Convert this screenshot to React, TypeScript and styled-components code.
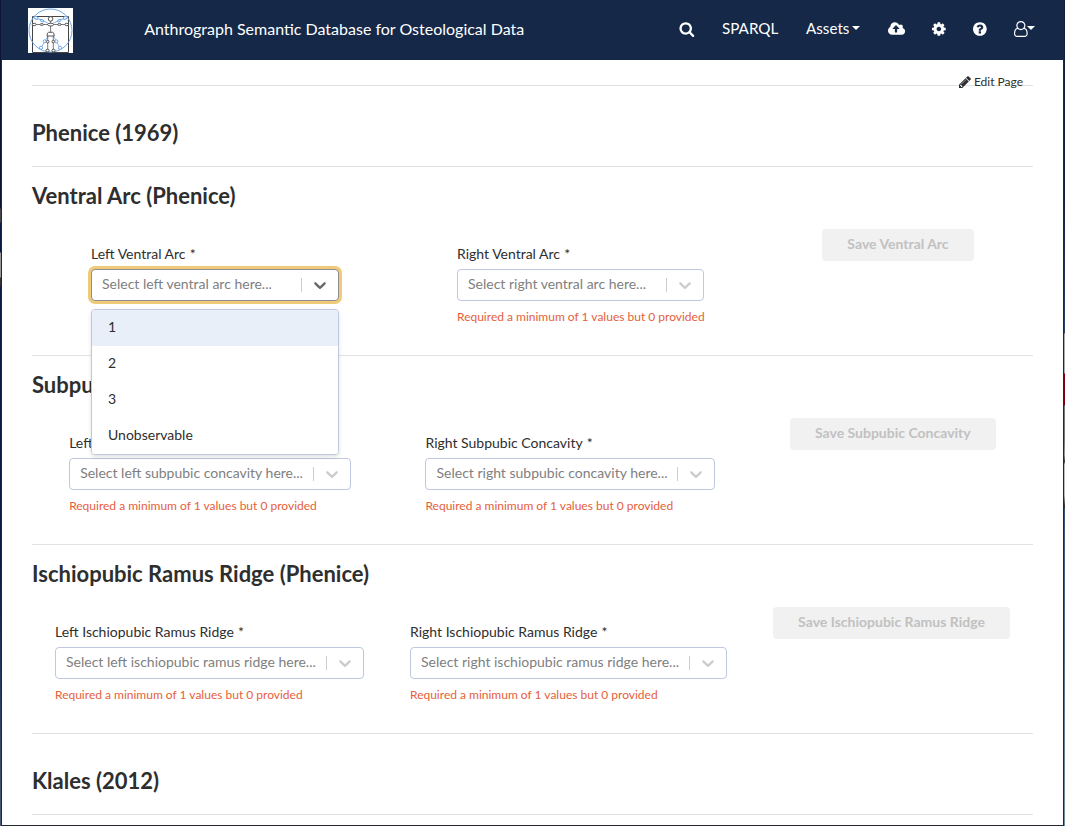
import React from 'react';
import styled, { createGlobalStyle } from 'styled-components';

const GlobalStyle = createGlobalStyle`
  * { box-sizing: border-box; }
  body { margin: 0; background: #fff; font-family: Lato, sans-serif; color: #2e2e2e; }
`;

const Frame = styled.div`
  width: 1065px;
  height: 826px;
  overflow: hidden;
  display: grid;
  grid-template-columns: 1px 1061px 1px;
  grid-template-rows: 825px;
  column-gap: 1px;
  padding-bottom: 1px;
  background: #23272e;
`;

const Desktop = styled.div<{ $fill: string }>`
  height: 826px;
  background: ${(p) => p.$fill};
`;

const Page = styled.div`
  background: #fff;
  overflow: hidden;
`;

const Navbar = styled.header`
  height: 60px;
  padding-left: 26px;
  display: flex;
  align-items: center;
  background: #152848;
  color: #fff;
  font-size: 16px;
  line-height: 20px;
`;

const Brand = styled.div`
  width: 45px;
  height: 45px;
  margin-right: 71.2px;
  background: #fff;
  svg { display: block; }
`;

const SiteName = styled.div`
  flex: 1;
  padding-bottom: 2px;
  white-space: nowrap;
`;

const Nav = styled.nav`
  display: flex;
  align-items: center;
  margin-right: 28px;
  padding-bottom: 3px;
  font-size: 15.2px;
`;

const NavItem = styled.span<{ $width: number }>`
  display: flex;
  align-items: center;
  width: ${(p) => p.$width}px;
  height: 20px;
  white-space: nowrap;
`;

const NavText = styled.span`
  padding-bottom: 2px;
`;

const Caret = styled.i<{ $gap?: number }>`
  margin-left: ${(p) => p.$gap ?? 0}px;
  border: 4px solid transparent;
  border-top-color: #fff;
  border-bottom: 0;
  margin-bottom: 1px;
`;

const Main = styled.main`
  width: 1001px;
  margin-left: 30px;
`;

const EditBar = styled.div`
  height: 26px;
  border-bottom: 1px solid #e1e2e3;
  display: flex;
  justify-content: flex-end;
  align-items: flex-start;
  padding: 14px 10px 0 0;
`;

const EditLink = styled.a`
  display: flex;
  align-items: center;
  gap: 3px;
  font-size: 12px;
  line-height: 15px;
`;

const Heading = styled.h2`
  margin: 0;
  font-size: 22px;
  line-height: 28px;
  font-weight: 700;
  white-space: nowrap;
`;

const Chapter = styled.div`
  height: 81px;
  padding-top: 33px;
  border-bottom: 1px solid #e1e2e3;
`;

const Section = styled.section`
  height: 189px;
  padding-top: 15px;
  border-bottom: 1px solid #e1e2e3;
`;

const Row = styled.div`
  display: flex;
  justify-content: space-around;
  align-items: flex-start;
  margin-top: 19px;
`;

const Field = styled.div<{ $width: number }>`
  position: relative;
  width: ${(p) => p.$width}px;
  padding-top: 16px;
`;

const Label = styled.label`
  display: block;
  height: 24px;
  font-size: 14px;
  line-height: 18px;
  white-space: nowrap;
`;

const Required = styled.span`
  margin-left: 4.2px;
`;

const Control = styled.div<{ $open?: boolean }>`
  height: 32px;
  display: flex;
  align-items: center;
  padding-left: 10px;
  background: #fff;
  border: 1px solid ${(p) => (p.$open ? '#8e8e93' : '#bec8de')};
  border-radius: 4px;
  box-shadow: ${(p) => (p.$open ? '0 0 0 3px #efcb79' : 'none')};
  color: ${(p) => (p.$open ? '#666' : '#ccc')};
`;

const Placeholder = styled.span`
  flex: 1;
  color: #808080;
  font-size: 14px;
  line-height: 18px;
  padding-bottom: 2px;
  white-space: nowrap;
`;

const Separator = styled.i`
  width: 1px;
  height: 14px;
  background: #ccc;
`;

const Arrow = styled.svg`
  width: 20px;
  height: 20px;
  margin: 0 8px;
  fill: currentColor;
`;

const ErrorText = styled.div`
  margin-top: 8px;
  color: #e5603b;
  font-size: 12px;
  line-height: 16px;
  white-space: nowrap;
`;

const Menu = styled.ul`
  position: absolute;
  z-index: 2;
  top: 80px;
  left: 0;
  width: 248px;
  margin: 0;
  padding: 0;
  list-style: none;
  background: #fff;
  border: 1px solid #bec8de;
  border-radius: 4px;
  box-shadow: 0 2px 4px rgba(0, 0, 0, 0.12);
  overflow: hidden;
`;

const Option = styled.li<{ $active?: boolean }>`
  height: 36px;
  padding-left: 16px;
  font-size: 14px;
  line-height: 33px;
  background: ${(p) => (p.$active ? '#e8eff9' : '#fff')};
`;

const SaveButton = styled.button<{ $width: number }>`
  width: ${(p) => p.$width}px;
  height: 32px;
  padding: 0 0 2px;
  border: 0;
  border-radius: 4px;
  background: #f1f1f1;
  color: #c1c1c1;
  font: 700 14px/18px Lato, sans-serif;
  white-space: nowrap;
`;

const glyphs = {
  search: ['64 0 1664 1792', 'M1152 832q0-185-131.5-316.5t-316.5-131.5-316.5 131.5-131.5 316.5 131.5 316.5 316.5 131.5 316.5-131.5 131.5-316.5zm512 832q0 52-38 90t-90 38q-54 0-90-38l-343-342q-179 124-399 124-143 0-273.5-55.5t-225-150-150-225-55.5-273.5 55.5-273.5 150-225 225-150 273.5-55.5 273.5 55.5 225 150 150 225 55.5 273.5q0 220-124 399l343 343q37 37 37 90z'],
  upload: ['-64 0 1920 1792', 'M1216 864q0-14-9-23l-352-352q-9-9-23-9t-23 9l-351 351q-10 12-10 24 0 14 9 23t23 9h224v352q0 13 9.5 22.5t22.5 9.5h192q13 0 22.5-9.5t9.5-22.5v-352h224q13 0 22.5-9.5t9.5-22.5zm640 288q0 159-112.5 271.5t-271.5 112.5h-1088q-185 0-316.5-131.5t-131.5-316.5q0-130 70-240t188-165q-2-30-2-43 0-212 150-362t362-150q156 0 285.5 87t188.5 231q71-62 166-62 106 0 181 75t75 181q0 76-41 138 130 31 213.5 135.5t83.5 238.5z'],
  cog: ['128 0 1536 1792', 'M1152 896q0-106-75-181t-181-75-181 75-75 181 75 181 181 75 181-75 75-181zm512-109v222q0 12-8 23t-20 13l-185 28q-19 54-39 91 35 50 107 138 10 12 10 25t-9 23q-27 37-99 108t-94 71q-12 0-26-9l-138-108q-44 23-91 38-16 136-29 186-7 28-36 28h-222q-14 0-24.5-8.5t-11.5-21.5l-28-184q-49-16-90-37l-141 107q-10 9-25 9-14 0-25-11-126-114-165-168-7-10-7-23 0-12 8-23 15-21 51-66.5t54-70.5q-27-50-41-99l-183-27q-13-2-21-12.5t-8-23.5v-222q0-12 8-23t19-13l186-28q14-46 39-92-40-57-107-138-10-12-10-24 0-10 9-23 26-36 98.5-107.5t94.5-71.5q13 0 26 10l138 107q44-23 91-38 16-136 29-186 7-28 36-28h222q14 0 24.5 8.5t11.5 21.5l28 184q49 16 90 37l142-107q9-9 24-9 13 0 25 10 129 119 165 170 7 8 7 22 0 12-8 23-15 21-51 66.5t-54 70.5q26 50 41 98l183 28q13 2 21 12.5t8 23.5z'],
  help: ['128 0 1536 1792', 'M1024 1376v-192q0-14-9-23t-23-9h-192q-14 0-23 9t-9 23v192q0 14 9 23t23 9h192q14 0 23-9t9-23zm256-672q0-88-55.5-163t-138.5-116-170-41q-243 0-371 213-15 24 8 42l132 100q7 6 19 6 16 0 25-12 53-68 86-92 34-24 86-24 48 0 85.5 26t37.5 59q0 38-20 61t-68 45q-63 28-115.5 86.5t-52.5 125.5v36q0 14 9 23t23 9h192q14 0 23-9t9-23q0-19 21.5-49.5t54.5-49.5q32-18 49-28.5t46-35 44.5-48 28-60.5 12.5-81zm384 192q0 209-103 385.5t-279.5 279.5-385.5 103-385.5-103-279.5-279.5-103-385.5 103-385.5 279.5-279.5 385.5-103 385.5 103 279.5 279.5 103 385.5z'],
  user: ['0 0 1536 1792', 'M1201 784q47 14 89.5 38t89 73 79.5 115.5 55 172 22 236.5q0 154-100 263.5t-241 109.5h-854q-141 0-241-109.5t-100-263.5q0-131 22-236.5t55-172 79.5-115.5 89-73 89.5-38q-79-125-79-272 0-104 40.5-198.5t109.5-163.5 163.5-109.5 198.5-40.5 198.5 40.5 163.5 109.5 109.5 163.5 40.5 198.5q0 147-79 272zm-433-656q-159 0-271.5 112.5t-112.5 271.5 112.5 271.5 271.5 112.5 271.5-112.5 112.5-271.5-112.5-271.5-271.5-112.5zm427 1536q88 0 150.5-71.5t62.5-173.5q0-239-78.5-377t-225.5-145q-145 127-336 127t-336-127q-147 7-225.5 145t-78.5 377q0 102 62.5 173.5t150.5 71.5h854z'],
  pencil: ['128 0 1536 1792', 'M491 1536l91-91-235-235-91 91v107h128v128h107zm523-928q0-22-22-22-10 0-17 7l-542 542q-7 7-7 17 0 22 22 22 10 0 17-7l542-542q7-7 7-17zm-54-192l416 416-832 832h-416v-416zm683 96q0 53-37 90l-166 166-416-416 166-165q36-38 90-38 53 0 91 38l235 234q37 39 37 91z'],
};

function Icon({ name, size = 16 }: { name: keyof typeof glyphs; size?: number }) {
  const [box, d] = glyphs[name];
  const width = (Number(box.split(' ')[2]) / 1792) * size;
  return (
    <svg viewBox={box} width={width} height={size} fill="currentColor" overflow="visible">
      <path d={d} />
    </svg>
  );
}

function Logo() {
  return (
    <svg width="45" height="45" viewBox="0 0 45 45" fill="none">
      <g stroke="#444" strokeWidth="1">
        <path d="M4.500 8.500h36v36h-36z" />
      </g>
      <g stroke="#6ba6e3" strokeWidth="1">
        <circle cx="22.500" cy="22.500" r="21.500" />
        <path d="M8 9.700l13 6M37.300 9.700l-13 6M20 28l-7 12M25.500 28l6.500 12" strokeWidth="0.8" />
        <g fill="#fff">
          <ellipse cx="8" cy="9.800" rx="2.200" ry="1.300" transform="rotate(25 8 9.800)" />
          <ellipse cx="14" cy="12.600" rx="1.900" ry="1" transform="rotate(25 14 12.600)" />
          <ellipse cx="37.300" cy="9.800" rx="2.200" ry="1.300" transform="rotate(-25 37.300 9.800)" />
          <ellipse cx="31.300" cy="12.600" rx="1.900" ry="1" transform="rotate(-25 31.300 12.600)" />
          <circle cx="16.700" cy="33.300" r="1.500" />
          <circle cx="28.300" cy="33.300" r="1.500" />
          <circle cx="13" cy="39.800" r="1.600" />
          <circle cx="32" cy="39.800" r="1.600" />
        </g>
      </g>
      <g stroke="#444" strokeWidth="0.9">
        <path d="M6 16.500h33M22.600 13v12M19.700 28v14M25.300 28v14" strokeWidth="0.7" />
        <g fill="#fff">
          <circle cx="22.600" cy="10.900" r="2.300" />
          <ellipse cx="22.600" cy="16.600" rx="3" ry="1.400" />
          <path d="M20.500 24.300h4.200q1.500 0 1.500 3.700h-7.200q0-3.700 1.500-3.700z" />
          <ellipse cx="6.200" cy="16.500" rx="1.900" ry="1.200" />
          <ellipse cx="13.800" cy="16.500" rx="1.800" ry="0.900" />
          <ellipse cx="31.400" cy="16.500" rx="1.800" ry="0.900" />
          <ellipse cx="38.700" cy="16.500" rx="1.900" ry="1.200" />
          <circle cx="19.700" cy="33.600" r="1.300" />
          <circle cx="25.300" cy="33.600" r="1.300" />
          <ellipse cx="19.500" cy="42.500" rx="1.600" ry="1.300" />
          <ellipse cx="25.500" cy="42.500" rx="1.600" ry="1.300" />
        </g>
      </g>
    </svg>
  );
}

function SelectField({ label, text, width, open }: { label: string; text: string; width: number; open?: boolean }) {
  return (
    <Field $width={width}>
      <Label>{label}<Required>*</Required></Label>
      <Control $open={open}>
        <Placeholder>Select {text} here...</Placeholder>
        <Separator />
        <Arrow viewBox="0 0 20 20">
          <path d="M4.516 7.548c0.436-0.446 1.043-0.481 1.576 0l3.908 3.747 3.908-3.747c0.533-0.481 1.141-0.446 1.574 0 0.436 0.445 0.408 1.197 0 1.615-0.406 0.418-4.695 4.502-4.695 4.502-0.217 0.223-0.502 0.335-0.787 0.335s-0.57-0.112-0.789-0.335c0 0-4.287-4.084-4.695-4.502s-0.436-1.17 0-1.615z" />
        </Arrow>
      </Control>
      {open ? (
        <Menu>
          {['1', '2', '3', 'Unobservable'].map((o, i) => (
            <Option key={o} $active={i === 0}>{o}</Option>
          ))}
        </Menu>
      ) : (
        <ErrorText>Required a minimum of 1 values but 0 provided</ErrorText>
      )}
    </Field>
  );
}

const sections = [
  { name: 'Ventral Arc', widths: [248, 247, 152], open: true },
  { name: 'Subpubic Concavity', widths: [282, 290, 206], open: false },
  { name: 'Ischiopubic Ramus Ridge', widths: [309, 317, 237], open: false },
];

export default function App() {
  return (
    <Frame>
      <GlobalStyle />
      <Desktop $fill="linear-gradient(#0d1436 0 208px, #44474f 209px 222px, #0b1a44 223px 252px, #999 253px 277px, #333 278px 285px, #0b1a44 288px 560px, #2b3f63 700px, #4a5a78 826px)" />
      <Page>
        <Navbar>
          <Brand><Logo /></Brand>
          <SiteName>Anthrograph Semantic Database for Osteological Data</SiteName>
          <Nav>
            <NavItem $width={42}><Icon name="search" /></NavItem>
            <NavItem $width={84}><NavText>SPARQL</NavText></NavItem>
            <NavItem $width={82}><NavText>Assets</NavText><Caret $gap={3} /></NavItem>
            <NavItem $width={44}><Icon name="upload" /></NavItem>
            <NavItem $width={41}><Icon name="cog" /></NavItem>
            <NavItem $width={41}><Icon name="help" /></NavItem>
            <NavItem $width={21}><Icon name="user" /><Caret $gap={-1} /></NavItem>
          </Nav>
        </Navbar>
        <Main>
          <EditBar><EditLink><Icon name="pencil" size={14} />Edit Page</EditLink></EditBar>
          <Chapter><Heading>Phenice (1969)</Heading></Chapter>
          {sections.map((s) => (
            <Section key={s.name}>
              <Heading>{s.name} (Phenice)</Heading>
              <Row>
                <SelectField label={`Left ${s.name}`} text={`left ${s.name.toLowerCase()}`} width={s.widths[0]} open={s.open} />
                <SelectField label={`Right ${s.name}`} text={`right ${s.name.toLowerCase()}`} width={s.widths[1]} />
                <SaveButton $width={s.widths[2]} disabled>Save {s.name}</SaveButton>
              </Row>
            </Section>
          ))}
          <Chapter><Heading>Klales (2012)</Heading></Chapter>
        </Main>
      </Page>
      <Desktop $fill="linear-gradient(#12203f 0 200px, #2b4468 333px, #aaa 334px 373px, #7a0010 374px 405px, #777 406px 440px, #999 455px, #333 462px, #bbb 464px 495px, #333 506px, #3a5478 510px, #6f8f9f 826px)" />
    </Frame>
  );
}
